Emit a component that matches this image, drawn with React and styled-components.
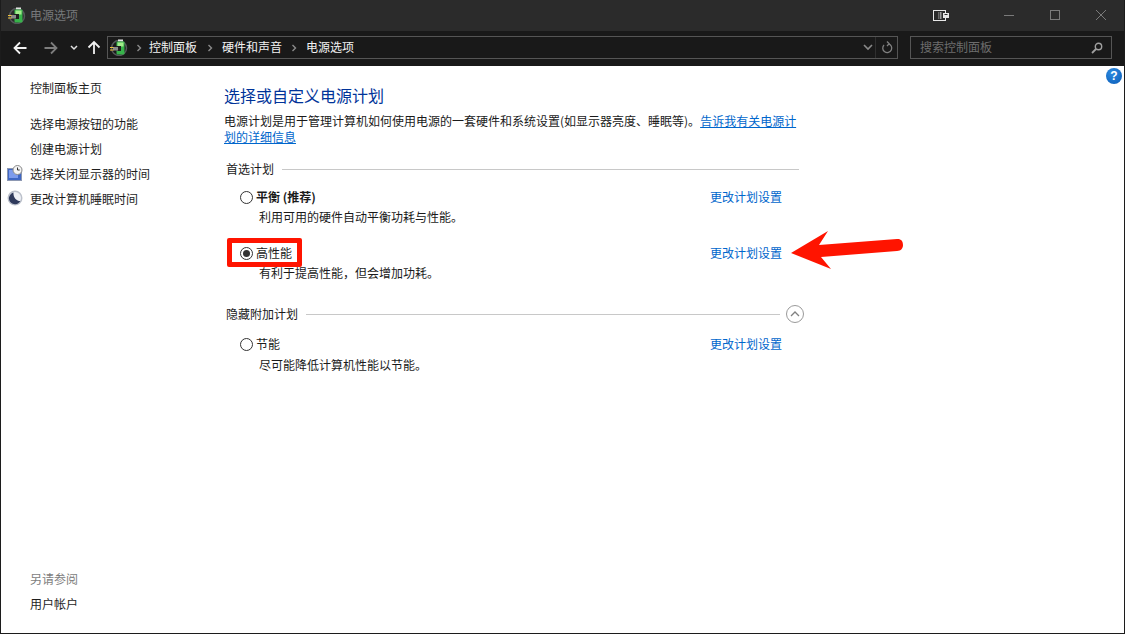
import React from 'react';
import styled, { createGlobalStyle } from 'styled-components';

const Global = createGlobalStyle`
  html, body {
    margin: 0;
    padding: 0;
    background: #fff;
  }
  body {
    font-family: "Noto Sans CJK SC", "Liberation Sans", sans-serif;
    font-size: 12px;
    line-height: 16px;
    color: #1a1a1a;
  }
`;

const Window = styled.div`
  position: relative;
  width: 1125px;
  height: 634px;
  box-sizing: border-box;
  display: flex;
  flex-direction: column;
  border: 1px solid #1c1c1c;
  border-top: none;
  overflow: hidden;
  background: #fff;
`;

const TitleBar = styled.header`
  height: 31px;
  flex: none;
  display: flex;
  align-items: center;
  background: #2b2b2b;
  padding-left: 7px;
`;

const TitleText = styled.span`
  margin: 0 0 2px 4px;
  color: #77797b;
`;

const TitleControls = styled.div`
  margin-left: auto;
  display: flex;
  align-items: center;
  height: 100%;
`;

const TitleButton = styled.div`
  width: 46px;
  height: 100%;
  margin-right: ${p => p.$gap || 0}px;
  padding-bottom: 1px;
  box-sizing: border-box;
  display: flex;
  align-items: center;
  justify-content: center;
`;

const NavBar = styled.nav`
  height: 35px;
  flex: none;
  display: flex;
  align-items: center;
  background: #191919;
  padding-left: 12px;
  padding-bottom: 2px;
  box-sizing: border-box;
`;

const NavIcon = styled.div`
  width: ${p => p.$w}px;
  margin-left: ${p => p.$gap || 0}px;
  height: 24px;
  flex: none;
  display: flex;
  align-items: center;
  justify-content: center;
`;

const AddressBar = styled.div`
  margin-left: 6px;
  width: 791px;
  height: 23px;
  box-sizing: border-box;
  border: 1px solid #555;
  display: flex;
  align-items: center;
  padding-left: 2px;
  color: #f2f2f2;
`;

const Crumb = styled.span`
  white-space: nowrap;
  padding-bottom: 2px;
`;

const CrumbArrow = styled.span`
  width: ${p => p.$w || 25}px;
  flex: none;
  display: flex;
  align-items: center;
  justify-content: center;
`;

const AddressEnd = styled.div`
  margin-left: auto;
  display: flex;
  align-items: center;
  height: 100%;
`;

const Refresh = styled.div`
  width: 21px;
  height: 100%;
  border-left: 1px solid #2f2f2f;
  display: flex;
  align-items: center;
  justify-content: center;
`;

const SearchBox = styled.div`
  margin-left: 12px;
  width: 202px;
  height: 23px;
  box-sizing: border-box;
  border: 1px solid #555;
  display: flex;
  align-items: center;
  justify-content: space-between;
  padding: 0 8px 0 9px;
  color: #6d6d6d;
`;

const SearchHint = styled.span`
  padding-bottom: 2px;
`;

const Body = styled.div`
  flex: 1;
  min-height: 0;
  display: flex;
  background: #fff;
`;

const Side = styled.aside`
  width: 223px;
  flex: none;
  display: flex;
  flex-direction: column;
  padding: 14px 0 12px;
  box-sizing: border-box;
`;

const SideLink = styled.div`
  position: relative;
  height: 25px;
  line-height: 16px;
  padding-left: 29px;
  color: #1e1e1e;
  white-space: nowrap;
  margin-top: ${p => p.$gap || 0}px;
`;

const SideIcon = styled.span`
  position: absolute;
  left: 6px;
  top: -1px;
`;

const SideFooter = styled.div`
  margin-top: auto;
`;

const SeeAlso = styled(SideLink)`
  color: #7d7d7d;
`;

const Main = styled.main`
  width: 580px;
  flex: none;
  padding-top: 18px;
`;

const Heading = styled.h1`
  margin: 0 0 7px;
  font-size: 16px;
  font-weight: 400;
  line-height: 22px;
  color: #003399;
`;

const Intro = styled.p`
  margin: 0;
  width: 575px;
  line-height: 16px;
`;

const A = styled.span`
  color: #0066cc;
  white-space: nowrap;
  text-decoration: ${p => (p.$underline ? 'underline' : 'none')};
`;

const GroupHeader = styled.div`
  display: flex;
  align-items: center;
  height: 16px;
  margin-top: ${p => p.$top}px;
  padding-left: 2px;
  width: ${p => p.$w}px;
  white-space: nowrap;
`;

const Rule = styled.div`
  flex: 1;
  height: 1px;
  background: #c8c8c8;
  margin-left: 8px;
`;

const Plan = styled.div`
  position: relative;
  margin-top: ${p => p.$top}px;
  padding-left: 16px;
  width: 542px;
`;

const PlanRow = styled.div`
  display: flex;
  align-items: center;
  height: 16px;
`;

const PlanName = styled.span`
  margin-left: 3px;
  font-weight: ${p => (p.$bold ? 700 : 400)};
`;

const PlanDesc = styled.div`
  margin-top: ${p => p.$gap}px;
  padding-left: 19px;
`;

const PlanLink = styled(A)`
  margin-left: auto;
`;

const Radio = styled.span`
  width: 13px;
  height: 13px;
  box-sizing: border-box;
  border: 1px solid #333;
  border-radius: 50%;
  background: #fff;
  flex: none;
  display: flex;
  align-items: center;
  justify-content: center;
  &::after {
    content: '';
    display: ${p => (p.$on ? 'block' : 'none')};
    width: 7px;
    height: 7px;
    border-radius: 50%;
    background: #333;
  }
`;

const Highlight = styled.div`
  position: absolute;
  left: 226px;
  top: 238px;
  width: 75px;
  height: 29px;
  box-sizing: border-box;
  border: 5px solid #ff1400;
  border-radius: 2px;
  pointer-events: none;
`;

const ArrowOverlay = styled.svg`
  position: absolute;
  left: 789px;
  top: 229px;
`;

const CollapseCircle = styled.span`
  width: 18px;
  height: 18px;
  flex: none;
  margin-left: 6px;
  box-sizing: border-box;
  border: 1px solid #9a9a9a;
  border-radius: 50%;
  display: flex;
  align-items: center;
  justify-content: center;
`;

const HelpBadge = styled.div`
  position: absolute;
  right: 2px;
  top: 68px;
  width: 16px;
  height: 16px;
  border-radius: 50%;
  background: radial-gradient(circle at 40% 30%, #2c8ae0, #0a5cb8);
  color: #fff;
  font: 700 12px/16px "Liberation Sans", sans-serif;
  text-align: center;
`;

const BatteryIcon = () => (
  <svg width="18" height="17" viewBox="0 0 18 17">
    <circle cx="9" cy="9" r="7.5" fill="none" stroke="#55585a" strokeWidth="1.5" />
    <rect x="8" y="0.5" width="5" height="2" fill="#e4e4e4" />
    <rect x="6.5" y="2.5" width="8" height="13" rx="1" fill="#37b34a" />
    <rect x="7.5" y="3.5" width="6" height="4" fill="#a4ec8c" />
    <path d="M6 7h5v5H7.5L6 11z" fill="#1f1f1f" />
    <rect x="3" y="8" width="5" height="3.5" fill="#8a8a8a" />
    <path d="M0 8.5h3.5M0 11h3.5" stroke="#f0c23c" strokeWidth="1.2" />
  </svg>
);

const ClockIcon = () => (
  <svg width="16" height="16" viewBox="0 0 16 16">
    <rect x="0.5" y="3.5" width="14" height="12" fill="#3f67c4" stroke="#8d98b2" />
    <rect x="2" y="5" width="9" height="8" fill="#7d9bec" />
    <circle cx="10.5" cy="5" r="4.5" fill="#f4f4f4" stroke="#8a8a8a" />
    <path d="M10.5 2.5V5h2.2" fill="none" stroke="#333" />
  </svg>
);

const MoonIcon = () => (
  <svg width="16" height="16" viewBox="0 0 16 16">
    <circle cx="8" cy="8" r="7.5" fill="#bcc1cb" />
    <circle cx="8" cy="8" r="6" fill="#eef0f5" />
    <path d="M6.5 2.5a6 6 0 1 0 6.8 8.5C9.5 11 6 7.5 6.5 2.5z" fill="#2f3a5c" />
  </svg>
);

const ChevronRight = () => (
  <svg width="6" height="8" viewBox="0 0 6 8">
    <path d="M1.5 1l3 3-3 3" fill="none" stroke="#8a8a8a" strokeWidth="1.4" />
  </svg>
);

const Arrow = ({ color, left }) => (
  <svg width="14" height="14" viewBox="0 0 14 14">
    <path
      d={left ? 'M13.5 7H2M7 1.5L1.5 7 7 12.5' : 'M0.5 7H12M7 1.5L12.5 7 7 12.5'}
      fill="none"
      stroke={color}
      strokeWidth="1.8"
    />
  </svg>
);

const PlanItem = ({ top, name, bold, on, desc, descGap = 4 }) => (
  <Plan $top={top}>
    <PlanRow>
      <Radio $on={on} />
      <PlanName $bold={bold}>{name}</PlanName>
      <PlanLink>更改计划设置</PlanLink>
    </PlanRow>
    <PlanDesc $gap={descGap}>{desc}</PlanDesc>
  </Plan>
);

export default function App() {
  return (
    <>
      <Global />
      <Window>
        <TitleBar>
          <BatteryIcon />
          <TitleText>电源选项</TitleText>
          <TitleControls>
            <TitleButton $gap={22}>
              <svg width="16" height="11" viewBox="0 0 16 11">
                <rect x="0.5" y="0.5" width="12" height="10" fill="#2b2b2b" stroke="#e8e8e8" />
                <rect x="5" y="2" width="1.5" height="7" fill="#6a6a6a" />
                <rect x="7" y="2" width="1.5" height="7" fill="#9a9a9a" />
                <rect x="10" y="3" width="6" height="5" fill="#e8e8e8" />
                <rect x="11.5" y="4" width="3" height="1" fill="#2b2b2b" />
              </svg>
            </TitleButton>
            <TitleButton>
              <svg width="10" height="10" viewBox="0 0 10 10">
                <path d="M0 5.5h10" stroke="#7a7a7a" />
              </svg>
            </TitleButton>
            <TitleButton>
              <svg width="10" height="10" viewBox="0 0 10 10">
                <rect x="0.5" y="0.5" width="9" height="9" fill="none" stroke="#7a7a7a" />
              </svg>
            </TitleButton>
            <TitleButton>
              <svg width="10" height="10" viewBox="0 0 10 10">
                <path d="M0 0l10 10M10 0L0 10" stroke="#7a7a7a" />
              </svg>
            </TitleButton>
          </TitleControls>
        </TitleBar>

        <NavBar>
          <NavIcon $w={14}><Arrow color="#f2f2f2" left /></NavIcon>
          <NavIcon $w={14} $gap={17}><Arrow color="#7d7d7d" /></NavIcon>
          <NavIcon $w={8} $gap={12}>
            <svg width="8" height="6" viewBox="0 0 8 6">
              <path d="M1 1l3 3 3-3" fill="none" stroke="#e0e0e0" strokeWidth="1.5" />
            </svg>
          </NavIcon>
          <NavIcon $w={14} $gap={9}>
            <svg width="14" height="15" viewBox="0 0 14 15">
              <path d="M7 14V2M1.5 7.5L7 2l5.5 5.5" fill="none" stroke="#f2f2f2" strokeWidth="1.8" />
            </svg>
          </NavIcon>
          <AddressBar>
            <BatteryIcon />
            <CrumbArrow $w={21}><ChevronRight /></CrumbArrow>
            <Crumb>控制面板</Crumb>
            <CrumbArrow><ChevronRight /></CrumbArrow>
            <Crumb>硬件和声音</Crumb>
            <CrumbArrow $w={24}><ChevronRight /></CrumbArrow>
            <Crumb>电源选项</Crumb>
            <AddressEnd>
              <NavIcon $w={15}>
                <svg width="10" height="7" viewBox="0 0 10 7">
                  <path d="M1 1l4 4 4-4" fill="none" stroke="#8a8a8a" strokeWidth="1.6" />
                </svg>
              </NavIcon>
              <Refresh>
                <svg width="12" height="13" viewBox="0 0 12 13">
                  <path d="M7.5 2.8A4.5 4.5 0 1 1 3 4M6 0.5l2.2 2.3L6 5" fill="none" stroke="#808080" strokeWidth="1.3" />
                </svg>
              </Refresh>
            </AddressEnd>
          </AddressBar>
          <SearchBox>
            <SearchHint>搜索控制面板</SearchHint>
            <svg width="12" height="12" viewBox="0 0 12 12">
              <circle cx="7.5" cy="4.5" r="3.2" fill="none" stroke="#a0a0a0" strokeWidth="1.4" />
              <path d="M5 7l-4 4" stroke="#a0a0a0" strokeWidth="1.8" />
            </svg>
          </SearchBox>
        </NavBar>

        <Body>
          <Side>
            <SideLink>控制面板主页</SideLink>
            <SideLink $gap={11}>选择电源按钮的功能</SideLink>
            <SideLink>创建电源计划</SideLink>
            <SideLink><SideIcon><ClockIcon /></SideIcon>选择关闭显示器的时间</SideLink>
            <SideLink><SideIcon><MoonIcon /></SideIcon>更改计算机睡眠时间</SideLink>
            <SideFooter>
              <SeeAlso>另请参阅</SeeAlso>
              <SideLink>用户帐户</SideLink>
            </SideFooter>
          </Side>
          <Main>
            <Heading>选择或自定义电源计划</Heading>
            <Intro>
              电源计划是用于管理计算机如何使用电源的一套硬件和系统设置(如显示器亮度、睡眠等)。<A $underline>告诉我有关电源计</A>
              <br />
              <A $underline>划的详细信息</A>
            </Intro>
            <GroupHeader $top={16} $w={573}>首选计划<Rule /></GroupHeader>
            <PlanItem top={12} name="平衡 (推荐)" bold desc="利用可用的硬件自动平衡功耗与性能。" />
            <PlanItem top={20} name="高性能" on desc="有利于提高性能，但会增加功耗。" />
            <GroupHeader $top={25} $w={578}>
              隐藏附加计划<Rule />
              <CollapseCircle>
                <svg width="10" height="6" viewBox="0 0 10 6">
                  <path d="M1 5l4-4 4 4" fill="none" stroke="#808080" strokeWidth="1.3" />
                </svg>
              </CollapseCircle>
            </GroupHeader>
            <PlanItem top={14} name="节能" descGap={5} desc="尽可能降低计算机性能以节能。" />
          </Main>
        </Body>

        <HelpBadge>?</HelpBadge>
        <Highlight />
        <ArrowOverlay width="116" height="42" viewBox="0 0 116 42">
          <path
            d="M1 24L38 2L29 16L107 10C111 9.7 113 12 113 16C113 19.5 111 21.7 107 22L31 28L41 40Z"
            fill="#ff1400"
          />
        </ArrowOverlay>
      </Window>
    </>
  );
}
